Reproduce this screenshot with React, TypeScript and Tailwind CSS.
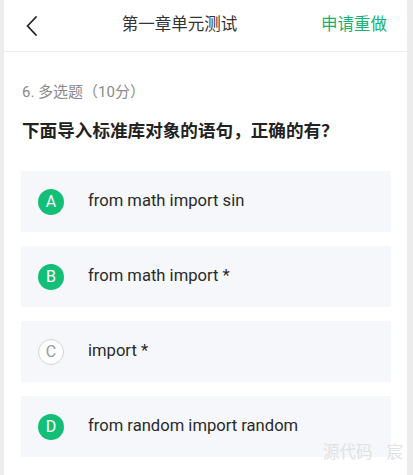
const options = [
  { key: 'A', text: 'from math import sin', selected: true },
  { key: 'B', text: 'from math import *', selected: true },
  { key: 'C', text: 'import *', selected: false },
  { key: 'D', text: 'from random import random', selected: true },
];

function BackIcon() {
  return (
    <svg width="12" height="20" viewBox="0 0 12 20" fill="none">
      <path d="M10 1 L1.5 10 L10 19" stroke="#222" strokeWidth="1.8" strokeLinecap="round" strokeLinejoin="round" />
    </svg>
  );
}

export default function App() {
  return (
    <div
      className="relative flex h-[475px] w-[413px] overflow-hidden bg-[#ececec] pl-[4px] pr-[6px]"
      style={{ fontFamily: 'Roboto, "Noto Sans CJK SC", sans-serif' }}
    >
      <div className="flex flex-1 flex-col bg-white">
        <header className="flex h-[52px] shrink-0 items-center border-b border-[#efefef]">
          <div className="flex w-[34px] justify-end pt-[1px]">
            <BackIcon />
          </div>
          <h1 className="flex-1 text-center text-[16.5px] text-[#333]">第一章单元测试</h1>
          <button className="pr-[20px] text-[16.5px] text-[#17b26f]">申请重做</button>
        </header>

        <div className="px-[17px] pr-[16px]">
          <p className="mt-[30px] pl-[1px] text-[15px] leading-[20px] text-[#8a8a8a]">6. 多选题（10分）</p>
          <h2 className="mt-[17px] pl-[1px] text-[17.6px] font-bold leading-[24px] text-[#222]">
            下面导入标准库对象的语句，正确的有？
          </h2>

          <div className="mt-[28px] flex flex-col gap-[14px]">
            {options.map((o) => (
              <div key={o.key} className="flex h-[61px] items-center bg-[#f5f7fa] pl-[17px]">
                <span
                  className={`flex h-[26px] w-[26px] items-center justify-center rounded-full text-[16px] ${
                    o.selected ? 'bg-[#13bf77] text-white' : 'border border-[#d4d4d4] bg-white text-[#999]'
                  }`}
                >
                  {o.key}
                </span>
                <span className="ml-[24px] text-[16.6px] text-[#2a2a2a]">{o.text}</span>
              </div>
            ))}
          </div>
        </div>
      </div>

      <div className="absolute bottom-[9px] right-[10px] flex gap-[14px] text-[16.5px] text-[#e2e2e2]">
        <span>源代码</span>
        <span>宸</span>
      </div>
    </div>
  );
}
